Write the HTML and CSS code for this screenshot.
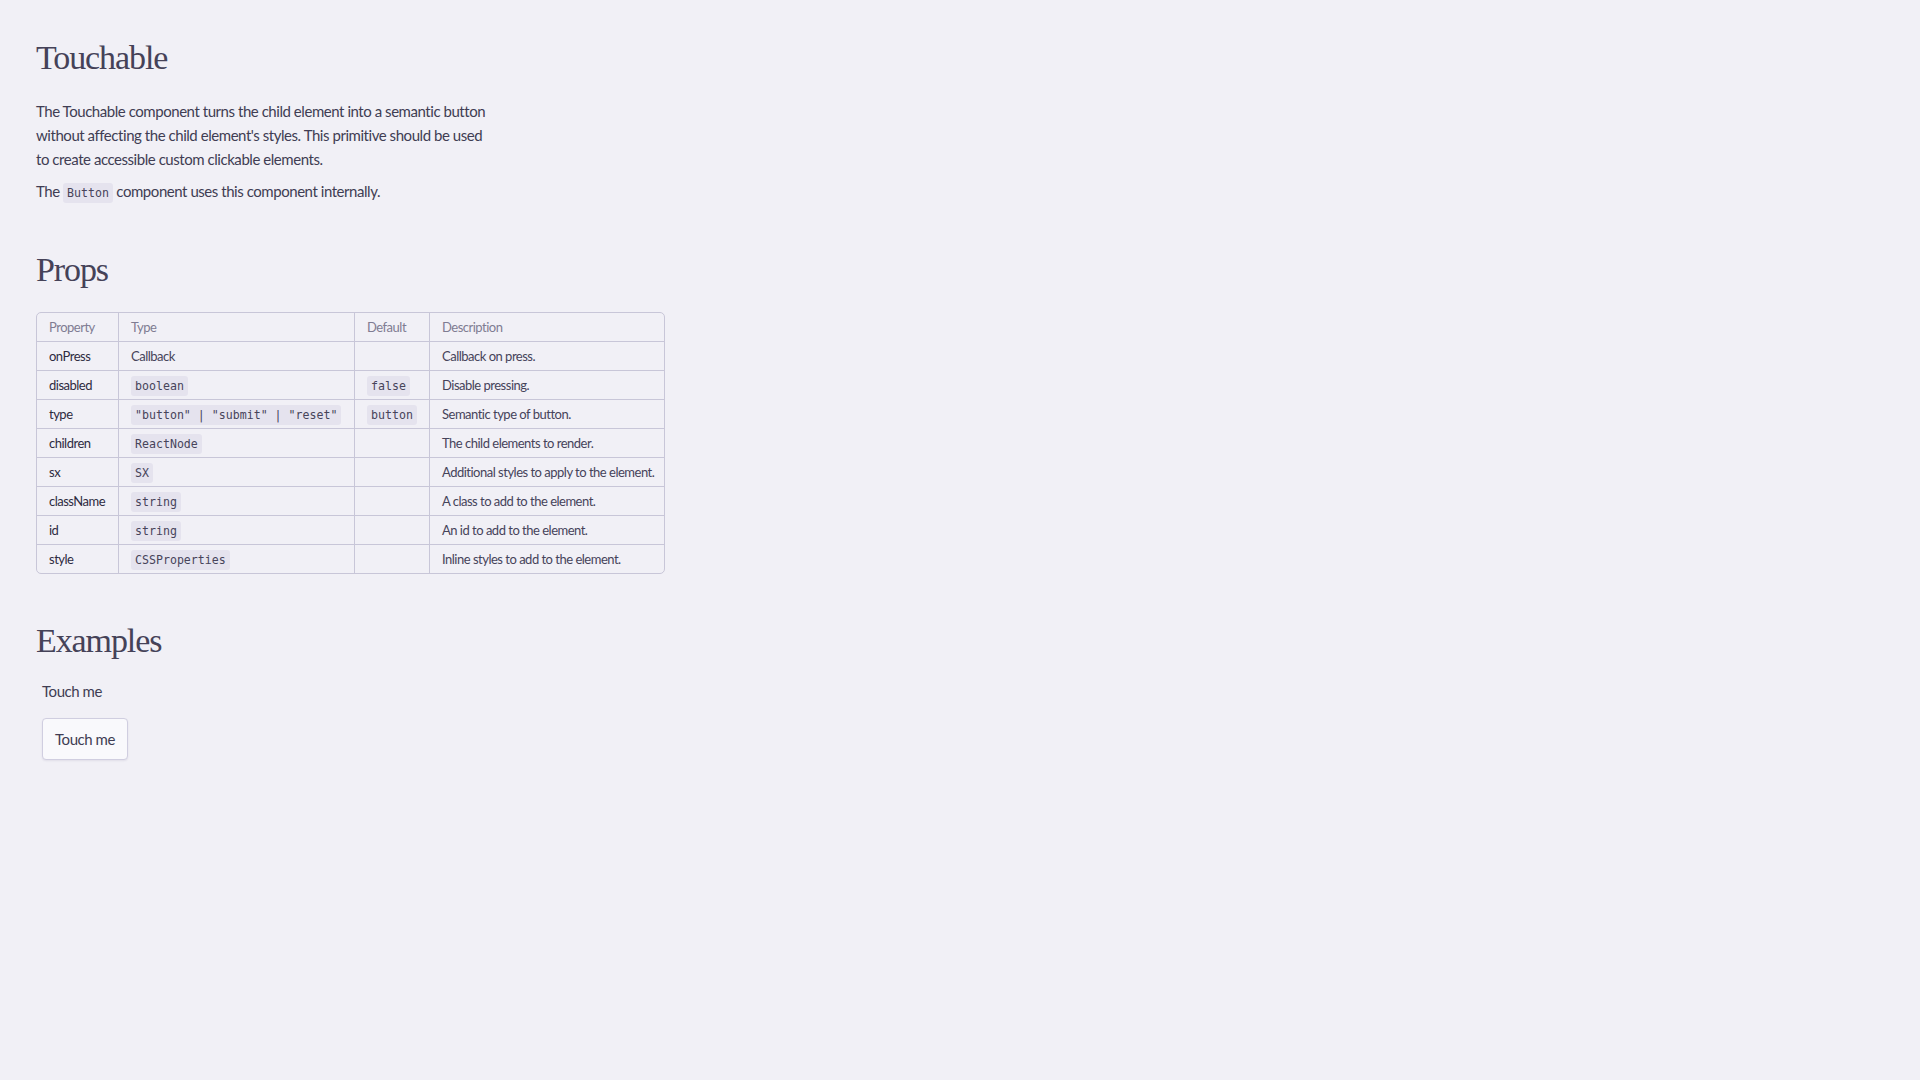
FILE: index.html
```html
<!DOCTYPE html>
<html lang="en">
<head>
<meta charset="utf-8">
<title>Touchable</title>
<link rel="stylesheet" href="styles.css">
</head>
<body>
<main class="page">
  <h1 class="title">Touchable</h1>
  <p class="text intro">The Touchable component turns the child element into a semantic button without affecting the child element's styles. This primitive should be used to create accessible custom clickable elements.</p>
  <p class="text">The <code class="code">Button</code> component uses this component internally.</p>

  <h2 class="title section">Props</h2>
  <div class="table-wrap">
    <table class="props">
      <colgroup>
        <col class="c-prop">
        <col class="c-type">
        <col class="c-def">
        <col class="c-desc">
      </colgroup>
      <thead>
        <tr><th>Property</th><th>Type</th><th>Default</th><th>Description</th></tr>
      </thead>
      <tbody>
        <tr><td class="name">onPress</td><td>Callback</td><td></td><td>Callback on press.</td></tr>
        <tr><td class="name">disabled</td><td><code class="code">boolean</code></td><td><code class="code">false</code></td><td>Disable pressing.</td></tr>
        <tr><td class="name">type</td><td><code class="code">"button" | "submit" | "reset"</code></td><td><code class="code">button</code></td><td>Semantic type of button.</td></tr>
        <tr><td class="name">children</td><td><code class="code">ReactNode</code></td><td></td><td>The child elements to render.</td></tr>
        <tr><td class="name">sx</td><td><code class="code">SX</code></td><td></td><td>Additional styles to apply to the element.</td></tr>
        <tr><td class="name">className</td><td><code class="code">string</code></td><td></td><td>A class to add to the element.</td></tr>
        <tr><td class="name">id</td><td><code class="code">string</code></td><td></td><td>An id to add to the element.</td></tr>
        <tr><td class="name">style</td><td><code class="code">CSSProperties</code></td><td></td><td>Inline styles to add to the element.</td></tr>
      </tbody>
    </table>
  </div>

  <h2 class="title section examples-title">Examples</h2>
  <div class="examples">
    <div class="touch-plain" role="button" tabindex="0">Touch me</div>
    <button class="touch-btn" type="button">Touch me</button>
  </div>
</main>
</body>
</html>
```
FILE: styles.css
```css
html, body {
  margin: 0;
  padding: 0;
  background: #f1f0f6;
}

body {
  font-family: Lato, "Liberation Sans", sans-serif;
  color: #403d53;
  font-size: 15px;
  line-height: 24px;
  letter-spacing: -0.45px;
}

.page {
  padding: 38px 36px 40px;
}

.title {
  font-family: "Liberation Serif", serif;
  font-weight: normal;
  font-size: 34px;
  line-height: 40px;
  letter-spacing: -1.1px;
  color: #454258;
  margin: 0 0 21px;
}

.section {
  margin-top: 47px;
  margin-bottom: 22px;
}

.examples-title {
  margin-top: 41px;
  margin-bottom: 12px;
}

.text {
  margin: 0 0 8px;
  max-width: 454px;
}

.code {
  font-family: "DejaVu Sans Mono", monospace;
  font-size: 11.6px;
  line-height: normal;
  letter-spacing: 0;
  background: #e5e3ee;
  color: #47445a;
  padding: 3px 4px;
  border-radius: 3px;
}

.table-wrap {
  display: inline-block;
  border: 1px solid #c8c6d8;
  border-radius: 5px;
  overflow: hidden;
}

.props {
  border-collapse: separate;
  border-spacing: 0;
  table-layout: fixed;
  width: 627px;
  font-size: 13px;
  line-height: 20px;
  letter-spacing: -0.5px;
}

.c-prop { width: 81px; }
.c-type { width: 236px; }
.c-def { width: 75px; }
.c-desc { width: 235px; }

.props th,
.props td {
  padding: 4px 12px;
  text-align: left;
  white-space: nowrap;
  border-bottom: 1px solid #c8c6d8;
  border-left: 1px solid #c8c6d8;
}

.props th:first-child,
.props td:first-child {
  border-left: none;
}

.props tbody tr:last-child td {
  border-bottom: none;
}

.props th {
  font-weight: normal;
  color: #7f7c92;
}

.props td {
  color: #46435a;
}

.props td.name {
  color: #2e2b3f;
}

.examples {
  display: flex;
  flex-direction: column;
  align-items: flex-start;
  gap: 15px;
  padding: 6px;
}

.touch-plain {
  color: #403d53;
}

.touch-btn {
  font: inherit;
  letter-spacing: inherit;
  color: #403d53;
  background: #f9f9fc;
  border: 1px solid #d0cee0;
  border-radius: 4px;
  padding: 8px 12px;
  box-shadow: 0 1px 2px rgba(40, 30, 80, 0.08);
}
```
